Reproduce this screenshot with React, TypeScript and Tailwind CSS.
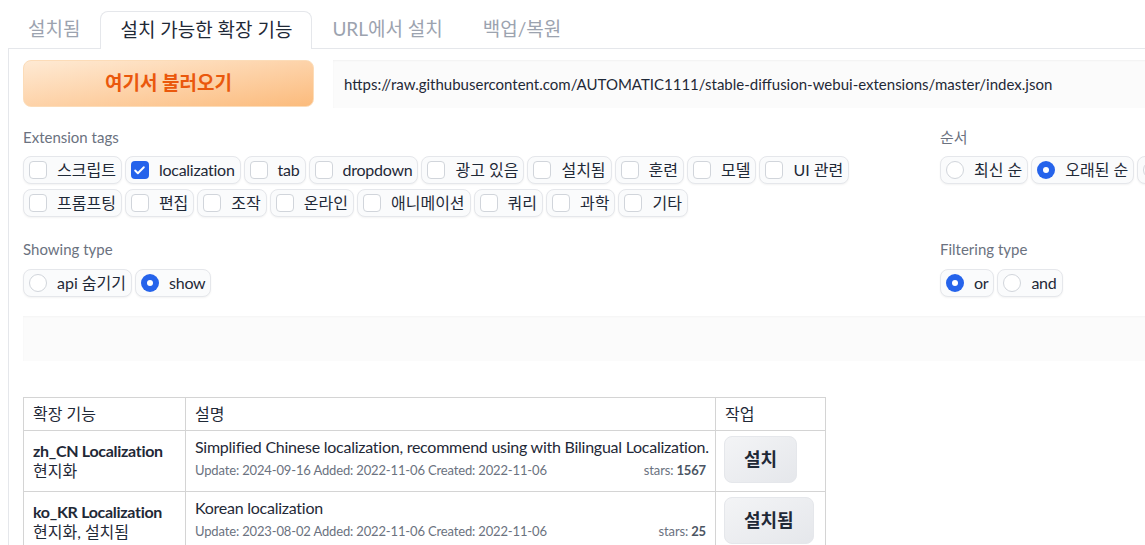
import { Check } from "lucide-react";

const tags: [string, boolean][] = [
  ["스크립트", false],
  ["localization", true],
  ["tab", false],
  ["dropdown", false],
  ["광고 있음", false],
  ["설치됨", false],
  ["훈련", false],
  ["모델", false],
  ["UI 관련", false],
  ["프롬프팅", false],
  ["편집", false],
  ["조작", false],
  ["온라인", false],
  ["애니메이션", false],
  ["쿼리", false],
  ["과학", false],
  ["기타", false],
];

// latin-only labels get a slightly tighter tracking to match the narrower source font
const isLatin = (s: string) => /^[\x00-\x7F]+$/.test(s);

function Pill({ children }: { children: React.ReactNode }) {
  return (
    <label className="flex h-[28px] items-center gap-[10px] rounded-lg border border-[#e5e7eb] bg-[#fafbfc] pl-[5px] pr-[5px] shadow-[0_1px_2px_rgba(0,0,0,0.05)]">
      {children}
    </label>
  );
}

function Label({ text }: { text: string }) {
  return (
    <span className={isLatin(text) ? "text-[16px] tracking-[-0.25px] text-[#1f2937]" : "text-[16px] text-[#1f2937]"}>
      {text}
    </span>
  );
}

function CheckPill({ label, checked }: { label: string; checked: boolean }) {
  return (
    <Pill>
      {checked ? (
        <span className="flex h-[18px] w-[18px] items-center justify-center rounded-[4px] bg-[#2563eb]">
          <Check size={13} strokeWidth={3.5} className="text-white" />
        </span>
      ) : (
        <span className="h-[18px] w-[18px] rounded-[4px] border border-[#d1d5db] bg-white" />
      )}
      <Label text={label} />
    </Pill>
  );
}

function RadioPill({ label, checked }: { label: string; checked: boolean }) {
  return (
    <Pill>
      {checked ? (
        <span className="flex h-[18px] w-[18px] items-center justify-center rounded-full bg-[#2563eb]">
          <span className="h-[6px] w-[6px] rounded-full bg-white" />
        </span>
      ) : (
        <span className="h-[18px] w-[18px] rounded-full border border-[#d1d5db] bg-white" />
      )}
      <Label text={label} />
    </Pill>
  );
}

const rows = [
  {
    name: "zh_CN Localization",
    tags: "현지화",
    desc: "Simplified Chinese localization, recommend using with Bilingual Localization.",
    meta: "Update: 2024-09-16 Added: 2022-11-06 Created: 2022-11-06",
    stars: "1567",
    action: "설치",
  },
  {
    name: "ko_KR Localization",
    tags: "현지화, 설치됨",
    desc: "Korean localization",
    meta: "Update: 2023-08-02 Added: 2022-11-06 Created: 2022-11-06",
    stars: "25",
    action: "설치됨",
  },
];

export default function App() {
  return (
    <div className="h-[545px] w-[1145px] overflow-hidden bg-white font-['Lato','Noto_Sans_CJK_KR',sans-serif] text-[#1f2937]">
      <div className="w-[1260px] pt-[11px]">
        {/* Tabs */}
        <div className="ml-[8px] flex h-[37px] items-stretch text-[19px]">
          <div className="flex items-center px-[20px] text-[#9ca3af]">설치됨</div>
          <div className="relative z-10 -mb-px flex items-center rounded-t-lg border border-b-0 border-[#e5e7eb] bg-white px-[19px] text-[#1f2937]">
            설치 가능한 확장 기능
          </div>
          <div className="flex items-center px-[20px] text-[#9ca3af]">URL에서 설치</div>
          <div className="flex items-center px-[20px] text-[#9ca3af]">백업/복원</div>
        </div>

        {/* Panel */}
        <div className="ml-[8px] border-l border-t border-[#e5e7eb] px-[14px] pt-[11px]">
          <div className="flex gap-[19px]">
            <button className="flex h-[47px] w-[291px] items-center justify-center rounded-lg border border-[#fcdcb8] bg-linear-to-br from-[#feead4] to-[#fbbb7c] text-[19px] font-bold text-[#ea580c]">
              여기서 불러오기
            </button>
            <div className="flex h-[48px] flex-1 items-center bg-[#fbfbfb] px-[11px] text-[15px] text-[#1f2937] shadow-[inset_0_1px_2px_rgba(0,0,0,0.04)]">
              https://raw.githubusercontent.com/AUTOMATIC1111/stable-diffusion-webui-extensions/master/index.json
            </div>
          </div>

          <div className="mt-[18px] flex gap-[15px]">
            <div className="w-[902px]">
              <div className="text-[15px] leading-[22px] text-[#6b7280]">Extension tags</div>
              <div className="mt-[8px] flex flex-wrap gap-x-[3px] gap-y-[5px]">
                {tags.map(([t, c]) => (
                  <CheckPill key={t} label={t} checked={c} />
                ))}
              </div>
              <div className="mt-[21px] text-[15px] leading-[22px] text-[#6b7280]">Showing type</div>
              <div className="mt-[9px] flex gap-[3px]">
                <RadioPill label="api 숨기기" checked={false} />
                <RadioPill label="show" checked />
              </div>
            </div>
            <div className="flex-1">
              <div className="text-[15px] leading-[22px] text-[#6b7280]">순서</div>
              <div className="mt-[8px] flex gap-[3px]">
                <RadioPill label="최신 순" checked={false} />
                <RadioPill label="오래된 순" checked />
                <RadioPill label="별 순" checked={false} />
              </div>
              <div className="mt-[54px] text-[15px] leading-[22px] text-[#6b7280]">Filtering type</div>
              <div className="mt-[9px] flex gap-[3px]">
                <RadioPill label="or" checked />
                <RadioPill label="and" checked={false} />
              </div>
            </div>
          </div>

          <div className="mt-[19px] h-[45px] bg-[#fbfbfb] shadow-[inset_0_1px_2px_rgba(0,0,0,0.03)]" />

          {/* Table */}
          <table className="mt-[36px] w-[803px] table-fixed border-collapse text-[16px]">
            <thead>
              <tr className="h-[33px]">
                <th className="w-[162px] border border-[#d4d4d4] px-[9px] text-left font-normal">확장 기능</th>
                <th className="w-[530px] border border-[#d4d4d4] px-[9px] text-left font-normal">설명</th>
                <th className="border border-[#d4d4d4] px-[9px] text-left font-normal">작업</th>
              </tr>
            </thead>
            <tbody>
              {rows.map((r) => (
                <tr key={r.name} className="h-[61px]">
                  <td className="border border-[#d4d4d4] px-[9px] pt-[10px] align-top leading-[20px]">
                    <div className="whitespace-nowrap font-bold tracking-[-0.3px]">{r.name}</div>
                    <div>{r.tags}</div>
                  </td>
                  <td className="border border-[#d4d4d4] px-[9px] pt-[4px] align-top">
                    <div className="whitespace-nowrap leading-[24px] tracking-[-0.25px]">{r.desc}</div>
                    <div className="flex justify-between text-[13px] leading-[22px] tracking-[-0.15px] text-[#6b7280]">
                      <span>{r.meta}</span>
                      <span>
                        stars: <b className="font-bold text-[#4b5563]">{r.stars}</b>
                      </span>
                    </div>
                  </td>
                  <td className="border border-[#d4d4d4] px-[8px] py-[5px] align-top">
                    <button className="h-[47px] rounded-lg border border-[#e5e7eb] bg-linear-to-br from-[#f3f4f6] to-[#e5e7eb] px-[19px] text-[18px] font-bold text-[#1f2937]">
                      {r.action}
                    </button>
                  </td>
                </tr>
              ))}
            </tbody>
          </table>
        </div>
      </div>
    </div>
  );
}
